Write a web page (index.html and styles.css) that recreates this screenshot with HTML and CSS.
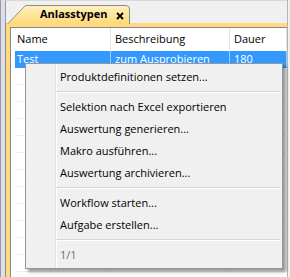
FILE: index.html
```html
<!DOCTYPE html>
<html lang="de">
<head>
    <meta charset="UTF-8">
    <title>Anlasstypen</title>
    <link rel="stylesheet" href="styles.css">
</head>
<body>
    <div class="window">
        <div class="side"></div>
        <div class="panel">
            <div class="tabstrip">
                <div class="tab">
                    <svg class="tab-shape" width="123" height="19" viewBox="0 0 123 19">
                        <defs>
                            <linearGradient id="tabfill" x1="0" y1="0" x2="0" y2="1">
                                <stop offset="0" stop-color="#fff1c0"/>
                                <stop offset="1" stop-color="#ffd97a"/>
                            </linearGradient>
                        </defs>
                        <path d="M0.5 19 L18.5 0.5 L119 0.5 Q122.5 0.5 122.5 4 L122.5 19" fill="url(#tabfill)" stroke="#8c8c8c"/>
                    </svg>
                    <span class="tab-title">Anlasstypen</span>
                    <svg class="tab-close" width="8" height="8" viewBox="0 0 8 8">
                        <path d="M1 1 L7 7 M7 1 L1 7" stroke="#000" stroke-width="1.8"/>
                    </svg>
                </div>
            </div>
            <div class="band"></div>
            <div class="body">
                <div class="grid">
                    <div class="row head">
                        <div class="cell c1">Name</div>
                        <div class="cell c2">Beschreibung</div>
                        <div class="cell c3">Dauer</div>
                    </div>
                    <div class="row selected">
                        <div class="cell c1">Test</div>
                        <div class="cell c2">zum Ausprobieren</div>
                        <div class="cell c3">180</div>
                    </div>
                    <div class="row"><div class="cell c1"></div><div class="cell c2"></div><div class="cell c3"></div></div>
                    <div class="row"><div class="cell c1"></div><div class="cell c2"></div><div class="cell c3"></div></div>
                    <div class="row"><div class="cell c1"></div><div class="cell c2"></div><div class="cell c3"></div></div>
                    <div class="row"><div class="cell c1"></div><div class="cell c2"></div><div class="cell c3"></div></div>
                    <div class="row"><div class="cell c1"></div><div class="cell c2"></div><div class="cell c3"></div></div>
                    <div class="row"><div class="cell c1"></div><div class="cell c2"></div><div class="cell c3"></div></div>
                    <div class="row"><div class="cell c1"></div><div class="cell c2"></div><div class="cell c3"></div></div>
                    <div class="row"><div class="cell c1"></div><div class="cell c2"></div><div class="cell c3"></div></div>
                    <div class="row"><div class="cell c1"></div><div class="cell c2"></div><div class="cell c3"></div></div>
                    <div class="row"><div class="cell c1"></div><div class="cell c2"></div><div class="cell c3"></div></div>
                    <div class="row"><div class="cell c1"></div><div class="cell c2"></div><div class="cell c3"></div></div>
                    <div class="row"><div class="cell c1"></div><div class="cell c2"></div><div class="cell c3"></div></div>
                </div>
            </div>
        </div>
    </div>

    <div class="menu">
        <div class="item">Produktdefinitionen setzen...</div>
        <div class="sep"></div>
        <div class="item">Selektion nach Excel exportieren</div>
        <div class="item">Auswertung generieren...</div>
        <div class="item">Makro ausführen...</div>
        <div class="item">Auswertung archivieren...</div>
        <div class="sep"></div>
        <div class="item">Workflow starten...</div>
        <div class="item">Aufgabe erstellen...</div>
        <div class="sep"></div>
        <div class="item disabled">1/1</div>
    </div>
</body>
</html>
```

FILE: styles.css
```css
body {
    margin: 0;
    width: 290px;
    height: 277px;
    overflow: hidden;
    background-color: #f0f0f0;
    font-family: 'Open Sans', sans-serif;
    font-size: 11px;
    color: #000;
}
.window {
    display: flex;
    height: 277px;
}
.side {
    width: 4px;
    background-color: #dedee8;
    border-left: 1px solid #9a9aa6;
}
.panel {
    flex: 1;
    display: flex;
    flex-direction: column;
    border-right: 1px solid #b4b4b4;
    margin-right: 2px;
}
.tabstrip {
    height: 23px;
    position: relative;
    border-left: 1px solid #9a9aa6;
    border-top: 1px solid #d8d8d8;
    box-sizing: border-box;
}
.tab {
    position: absolute;
    left: 1px;
    top: 4px;
    width: 123px;
    height: 19px;
}
.tab-shape {
    position: absolute;
    left: 0;
    top: 0;
}
.tab-title {
    position: absolute;
    left: 33px;
    top: 1px;
    font-weight: bold;
    font-size: 11px;
}
.tab-close {
    position: absolute;
    left: 109px;
    top: 7px;
}
.band {
    height: 4px;
    background-color: #ffd97c;
    border-left: 1px solid #8c8c8c;
}
.body {
    flex: 1;
    background-color: #ffd97c;
    border-left: 1px solid #8c8c8c;
    padding-left: 4px;
}
.grid {
    height: 100%;
    background-color: #fff;
    border-left: 1px solid #828790;
    border-top: 1px solid #828790;
    padding-left: 4px;
}
.row {
    display: flex;
    height: 17px;
}
.row.head {
    height: 23px;
}
.cell {
    box-sizing: border-box;
    border-right: 1px solid #e8e8e8;
    border-bottom: 1px solid #efefef;
    padding-left: 2px;
    line-height: 16px;
    white-space: nowrap;
    overflow: hidden;
}
.head .cell {
    line-height: 22px;
    border-right-color: #e3e3e3;
    border-bottom-color: #fff;
}
.c1 {
    width: 96px;
}
.c2 {
    width: 119px;
    padding-left: 4px;
}
.c3 {
    flex: 1;
    padding-left: 4px;
}
.selected .cell {
    background-color: #3399ff;
    color: #fff;
    border-right-color: #99ccff;
    border-bottom-color: #3399ff;
}
.menu {
    position: absolute;
    left: 25px;
    top: 63px;
    width: 256px;
    padding: 2px 0;
    background-color: #f0f0f0;
    border: 1px solid #979797;
    box-shadow: 3px 3px 3px rgba(0, 0, 0, 0.4);
    background-image: linear-gradient(to right, transparent 29px, #e2e3e3 29px, #e2e3e3 30px, #fff 30px, #fff 31px, transparent 31px);
}
.item {
    height: 22px;
    line-height: 22px;
    padding-left: 34px;
}
.item.disabled {
    color: #6d6d6d;
}
.sep {
    height: 8px;
    margin-left: 30px;
    margin-right: 2px;
    background-image: linear-gradient(to bottom, transparent 3px, #d7d7d7 3px, #d7d7d7 4px, #fff 4px, #fff 5px, transparent 5px);
}
```
